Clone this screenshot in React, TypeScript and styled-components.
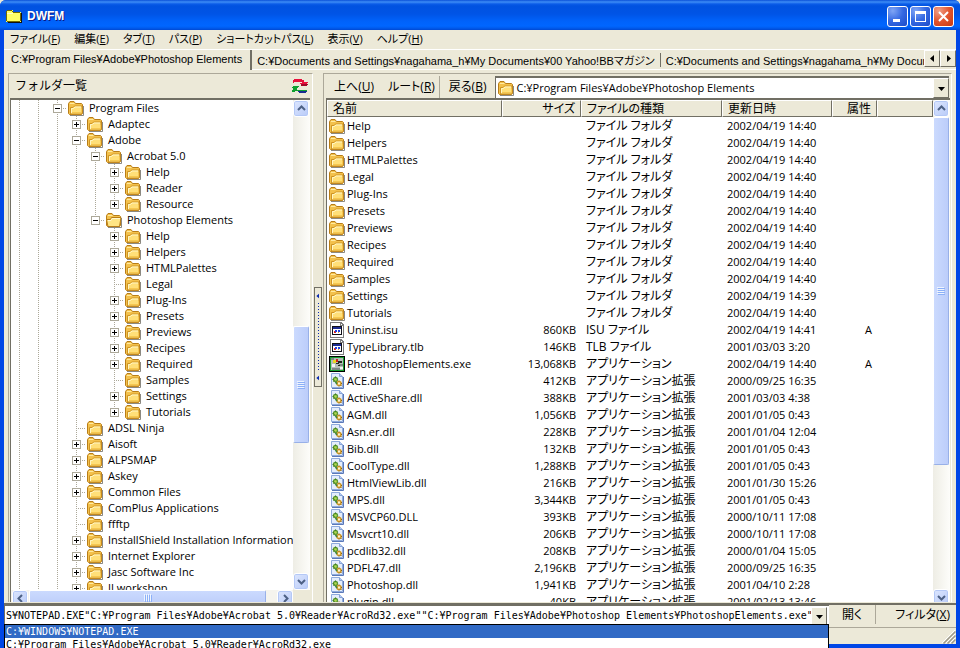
import React from 'react';
import styled, { createGlobalStyle, css } from 'styled-components';

const face = '#ece9d8';
const shade = '#aca899';
const dark = '#716f64';
const uiFont = '"Open Sans", "Noto Sans CJK JP", sans-serif';

const Global = createGlobalStyle`
  *, *::before, *::after { box-sizing: border-box; }
  html, body, #root { height: 100%; }
  body { margin: 0; overflow: hidden; background: ${face}; font: 11px/16px ${uiFont}; font-feature-settings: "palt"; color: #000; }
  button, input, select { font: inherit; font-feature-settings: inherit; color: inherit; margin: 0; padding: 0; border: 0; border-radius: 0; background: none; }
  svg { display: block; flex: none; }
`;

/* ---------- window frame ---------- */

const Window = styled.div`
  height: 100%;
  display: flex;
  flex-direction: column;
  overflow: hidden;
  background: #0046e6;
  border-radius: 6px 6px 0 0;
`;

const TitleBar = styled.header`
  flex: none;
  height: 30px;
  display: flex;
  align-items: center;
  gap: 2px;
  padding: 2px 6px 0 6px;
  background: linear-gradient(#0a50d8 0, #3d8df6 2px, #0a5ce8 4px, #0052e0 6px, #0054e6 14px, #0062fa 21px, #0066ff 26px, #005bee 28px, #0048d2 30px);
`;

const Title = styled.h1`
  flex: 1;
  margin: 0 0 0 3px;
  font: bold 12px/16px "Liberation Sans", sans-serif;
  color: #fff;
  text-shadow: 1px 1px 0 #0a1883;
`;

const CaptionButton = styled.button<{ $close?: boolean }>`
  width: 21px;
  height: 21px;
  display: grid;
  place-items: center;
  border: 1px solid #fff;
  border-radius: 3px;
  background: ${p => (p.$close
    ? 'radial-gradient(circle at 25% 20%, #f0a088, #e2552e 50%, #c63810)'
    : 'radial-gradient(circle at 25% 20%, #7fa5f5, #3468e2 50%, #1c4bc8)')};
`;

const Client = styled.div`
  flex: 1;
  min-height: 0;
  margin: 0 4px 4px;
  display: flex;
  flex-direction: column;
  background: ${face};
`;

/* ---------- menu and tabs ---------- */

const MenuBar = styled.nav`
  flex: none;
  height: 20px;
  display: flex;
  align-items: flex-start;
  border-bottom: 1px solid #fff;
`;

const MenuItem = styled.button`
  height: 18px;
  padding: 0 7px;
  line-height: 18px;
  white-space: nowrap;
  &:first-child { padding-left: 6px; }
`;

const TabStrip = styled.div`
  flex: none;
  height: 20px;
  display: flex;
  align-items: stretch;
  overflow: hidden;
`;

const TabList = styled.div`
  flex: 1;
  min-width: 0;
  display: flex;
  overflow: hidden;
`;

const Tab = styled.button<{ $active?: boolean }>`
  flex: none;
  padding: 2px 6px 0 5px;
  font-family: "Liberation Sans", "Noto Sans CJK JP", sans-serif;
  line-height: 16px;
  white-space: nowrap;
  text-align: left;
  ${p => (p.$active
    ? css`
        padding: 0 8px 2px 7px;
        border-right: 2px solid ${dark};
      `
    : css`
        border-bottom: 1px solid #fff;
        background: linear-gradient(${dark}, ${dark}) right 3px / 1px 14px no-repeat;
      `)}
`;

const TabArrows = styled.div`
  flex: none;
  display: flex;
  border-bottom: 1px solid #fff;
`;

const raised = css`
  border: 1px solid;
  border-color: #fff ${dark} ${dark} #fff;
  background: ${face};
`;

const ArrowButton = styled.button`
  ${raised}
  width: 16px;
  height: 17px;
  display: grid;
  place-items: center;
`;

/* ---------- panels ---------- */

const Panels = styled.main`
  flex: 1;
  min-height: 0;
  display: grid;
  grid-template-columns: 305px 10px minmax(0, 1fr);
  padding: 3px 4px 1px;
  overflow: hidden;
`;

const Panel = styled.section`
  min-width: 0;
  min-height: 0;
  display: flex;
  flex-direction: column;
  border: 1px solid;
  border-color: ${shade} #fff #fff ${shade};
  border-bottom: 0;
`;

const PanelHead = styled.div`
  flex: none;
  height: 24px;
  display: flex;
  align-items: center;
  padding: 0 4px 0 6px;
`;

const PanelTitle = styled.h2`
  flex: 1;
  margin: 0;
  font: 12px/16px ${uiFont};
`;

const IconButton = styled.button`
  display: block;
`;

const Well = styled.div`
  flex: 1;
  min-height: 0;
  margin: 0 1px 0 2px;
  display: flex;
  overflow: hidden;
  border-top: 2px solid ${dark};
  border-left: 1px solid ${dark};
  background: #fff;
`;

const WellMain = styled.div`
  flex: 1;
  min-width: 0;
  overflow: hidden;
`;

const TreeWell = styled(Well)`
  margin: 0 2px 0 1px;
  flex-direction: column;
`;

const TreeBody = styled.div`
  flex: 1;
  min-height: 0;
  display: flex;
`;

const Splitter = styled.div`
  display: flex;
  align-items: center;
  justify-content: center;
  padding-bottom: 2px;
`;

const Grip = styled.button`
  width: 8px;
  height: 100px;
  display: flex;
  flex-direction: column;
  align-items: center;
  justify-content: space-between;
  padding: 5px 0;
  border: 1px solid ${dark};
  background: ${face};
`;

const GripDots = styled.span`
  flex: 1;
  width: 1px;
  margin: 4px 0;
  background: repeating-linear-gradient(#0a2ab0 0 1px, transparent 1px 3px);
`;

/* ---------- scroll bars ---------- */

const VBar = styled.div<{ $tall?: boolean }>`
  flex: none;
  width: 17px;
  margin-bottom: ${p => (p.$tall ? '-4px' : 0)};
  display: flex;
  flex-direction: column;
  background: linear-gradient(90deg, #eeede5, #fdfdfa);
`;

const ScrollButton = styled.button`
  flex: none;
  width: 16px;
  height: 17px;
  display: grid;
  place-items: center;
  border: 1px solid #fff;
  border-radius: 3px;
  box-shadow: inset 0 0 0 1px #b4c8f6;
  background: linear-gradient(135deg, #dce6fe, #b9cbf8);
`;

const Track = styled.div<{ $before: number; $thumb: number; $after: number; $row?: boolean }>`
  flex: 1;
  min-height: 0;
  min-width: 0;
  display: grid;
  ${p => (p.$row ? 'grid-template-columns' : 'grid-template-rows')}: ${p => `${p.$before}fr ${p.$thumb}fr ${p.$after}fr`};
  ${p => (p.$row ? 'grid-template-rows' : 'grid-template-columns')}: 100%;
`;

const Thumb = styled.div<{ $row?: boolean }>`
  ${p => (p.$row ? 'grid-column: 2;' : 'grid-row: 2; margin-right: 1px;')}
  display: grid;
  place-items: center;
  border: 1px solid #98b0e8;
  border-top-color: #fff;
  border-left-color: #fff;
  border-radius: 2px;
  background: linear-gradient(${p => (p.$row ? '180deg' : '90deg')}, #cbdafe, #bccdfa);
`;

const HBar = styled.div`
  flex: none;
  height: 12px;
  display: flex;
  align-items: flex-start;
  overflow: hidden;
  padding-left: 1px;
  background: #f5f4ee;
`;

const HSpace = styled.div`
  flex: none;
  width: 17px;
  height: 100%;
  background: ${face};
`;

const HTrack = styled(Track)`
  height: 16px;
`;

/* ---------- tree ---------- */

const TreeList = styled.ul`
  margin: 0;
  padding: 0;
  list-style: none;
`;

const TreeRow = styled.li`
  height: 16px;
  display: flex;
  align-items: center;
  white-space: nowrap;
`;

const dotsV = `repeating-linear-gradient(${shade} 0 1px, transparent 1px 2px)`;
const dotsH = `repeating-linear-gradient(90deg, ${shade} 0 1px, transparent 1px 2px)`;

const Guide = styled.span<{ $line?: boolean; $branch?: boolean; $last?: boolean }>`
  flex: none;
  width: 19px;
  height: 16px;
  display: flex;
  align-items: center;
  padding-left: 4px;
  background-repeat: no-repeat;
  ${p => p.$line && !p.$branch && css`
    background-image: ${dotsV};
    background-size: 1px 16px;
    background-position: 8px 0;
  `}
  ${p => p.$branch && css`
    background-image: ${dotsV}, ${dotsH};
    background-size: 1px ${p.$last ? 8 : 16}px, 10px 1px;
    background-position: 8px 0, 8px 8px;
  `}
`;

const Expander = styled.button`
  width: 9px;
  height: 9px;
  background: #fff;
`;

const TreeLabel = styled.span`
  padding-left: 5px;
`;

/* ---------- file list ---------- */

const FileToolbar = styled.div`
  flex: none;
  height: 24px;
  display: flex;
  align-items: stretch;
  padding: 2px 2px 0 3px;
`;

const ToolButton = styled.button<{ $rule?: boolean }>`
  flex: none;
  padding: 0 7px;
  font-size: 12px;
  line-height: 20px;
  white-space: nowrap;
  ${p => p.$rule && css`
    padding-right: 4px;
    margin-right: 2px;
    border-right: 1px solid ${shade};
  `}
`;

const AddressBox = styled.div`
  flex: 1;
  min-width: 0;
  display: flex;
  align-items: stretch;
  margin-left: 2px;
  padding-left: 2px;
  border-top: 2px solid ${dark};
  border-left: 1px solid ${dark};
  background: #fff;
  svg { align-self: center; }
`;

const AddressSelect = styled.select`
  flex: 1;
  min-width: 0;
  appearance: none;
  padding-left: 2px;
  outline: 0;
`;

const DropButton = styled.button`
  ${raised}
  flex: none;
  width: 16px;
  display: grid;
  place-items: center;
`;

const FileTable = styled.table`
  width: 100%;
  table-layout: fixed;
  border-collapse: separate;
  border-spacing: 0;
`;

const HeadCell = styled.th<{ $align?: string }>`
  height: 17px;
  padding: 0 5px;
  font-size: 12px;
  font-weight: normal;
  line-height: 15px;
  text-align: ${p => p.$align ?? 'left'};
  white-space: nowrap;
  border: 1px solid;
  border-color: #fff ${dark} ${dark} #fff;
  background: ${face};
`;

const Cell = styled.td<{ $align?: string }>`
  height: 17px;
  padding: 0 5px;
  line-height: 17px;
  text-align: ${p => p.$align ?? 'left'};
  white-space: nowrap;
`;

const TypeCell = styled(Cell)`
  font-size: 12px;
`;

const NameCell = styled(Cell)`
  padding: 0 2px;
`;

const FileName = styled.span`
  display: flex;
  align-items: center;
  gap: 2px;
  height: 17px;
`;

/* ---------- bottom bars ---------- */

const CommandBar = styled.footer`
  flex: none;
  height: 25px;
  display: flex;
  align-items: stretch;
  border-top: 2px solid ${dark};
  border-bottom: 1px solid ${shade};
`;

const CommandCombo = styled.div`
  position: relative;
  flex: 1;
  min-width: 0;
  height: 20px;
  display: flex;
  padding: 1px 2px 0 1px;
  border-left: 1px solid ${dark};
  border-top: 1px solid ${dark};
  background: #fff;
`;

const mono = css`
  font-family: "DejaVu Sans Mono", "Noto Sans CJK JP", monospace;
  font-size: 10px;
`;

const CommandInput = styled.input`
  ${mono}
  flex: 1;
  min-width: 0;
  outline: 0;
`;

const History = styled.ul`
  ${mono}
  position: absolute;
  z-index: 2;
  top: 18px;
  left: -1px;
  right: 0;
  height: 40px;
  margin: 0;
  padding: 0;
  list-style: none;
  border: 1px solid #000;
  background: #fff;
`;

const HistoryItem = styled.li<{ $selected?: boolean }>`
  height: 13px;
  padding-left: 1px;
  line-height: 13px;
  white-space: nowrap;
  background: ${p => (p.$selected ? '#316ac5' : '#fff')};
  color: ${p => (p.$selected ? '#fff' : '#000')};
`;

const CommandActions = styled.div`
  flex: none;
  width: 127px;
  display: flex;
  justify-content: space-between;
  font-size: 12px;
`;

const OpenButton = styled.button`
  width: 47px;
  border-right: 1px solid ${shade};
  margin-bottom: 3px;
`;

const FilterButton = styled.button`
  padding: 0 6px 3px;
`;

const StatusBar = styled.div`
  flex: none;
  height: 16px;
  display: flex;
  justify-content: flex-end;
  align-items: flex-end;
`;

/* ---------- drawings ---------- */

const FolderIcon = ({ open = false }: { open?: boolean }) => (
  <svg width="16" height="16" viewBox="0 0 16 16" aria-hidden="true">
    <path d="M2 15.500h13.500V6" fill="none" stroke="#6f6c62" strokeOpacity=".8" />
    <path d="M.5 13.500V3.500l1.500-2h4l1.500 2h6l1 1v9l-1 1H1.500z" fill="#f3c14c" stroke="#b87d18" />
    <path d="M2 3.500h4.500" stroke="#ffeaa0" />
    {open ? (
      <>
        <path d="M.5 7.500h4l1-2h9.500l-1.500 9H2z" fill="#ffe584" stroke="#b87d18" />
        <path d="M2 8.500h3l1-2h8" fill="none" stroke="#fff8cf" />
      </>
    ) : (
      <>
        <path d="M2.500 14V7.500h2.500l1.500-1.500h7.500V14z" fill="#ffdf78" stroke="#cf9424" />
        <path d="M3.500 13V8.500H5.500L7 7h6" fill="none" stroke="#fff6c4" />
        <path d="M4 12.500h9.500V9" fill="none" stroke="#f7c850" />
      </>
    )}
  </svg>
);

const DocIcon = () => (
  <svg width="16" height="16" viewBox="0 0 16 16" aria-hidden="true" shapeRendering="crispEdges">
    <path d="M1 0h11l3 3v13H1z" fill="#7c7c7c" />
    <path d="M2 1h9v3h3v11H2z" fill="#fff" />
    <path d="M12 2h1v1h-1z" fill="#fff" />
    <path d="M3 4h10v9H3z" fill="#101018" />
    <path d="M4 5h8v2H4z" fill="#1c2c90" />
    <path d="M4 7h8v5H4z" fill="#fff" />
    <path d="M5 9h2v2H5z" fill="#e02020" />
    <path d="M6 8h2v2H6z" fill="#2040e0" />
    <path d="M9 8h2v2H9z" fill="#2040e0" />
    <path d="M9 10h1v1H9z" fill="#e0a020" />
  </svg>
);

const AppIcon = () => (
  <svg width="16" height="16" viewBox="0 0 16 16" aria-hidden="true" shapeRendering="crispEdges">
    <path d="M0 0h16v16H0z" fill="#000" />
    <path d="M1 1h14v14H1z" fill="#18a030" />
    <path d="M2 2h12v12H2z" fill="#b4bcb8" />
    <path d="M2 2h3v2H2zM10 8h4v2h-4zM3 12h8v2H3z" fill="#7d8a84" />
    <path d="M4 4h3v3H4z" fill="#e8d820" />
    <path d="M7 3h2v3H7z" fill="#d02020" />
    <path d="M9 5h4v2H9zM7 7h3v1H7zM9 9h2v1H9z" fill="#202820" />
    <path d="M3 8h3v3H3zM11 11h3v2h-3z" fill="#f4f6f4" />
  </svg>
);

const DllIcon = () => (
  <svg width="16" height="16" viewBox="0 0 16 16" aria-hidden="true">
    <path d="M2.500.5h8l3 3v11h-11z" fill="#e4edfc" stroke="#8fabdc" />
    <path d="M10.500.5v3h3" fill="#b7cbf2" stroke="#86a2d6" />
    <path d="M3 15.500h11.500V4" fill="none" stroke="#5a78b8" />
    <circle cx="6.500" cy="6.500" r="2" fill="#b4d850" stroke="#5c9a34" strokeWidth="1.300" />
    <path d="M6.500 3.500v1.500M3.500 6.500H5M4.500 8.500l1-1" stroke="#3f7c2c" />
    <circle cx="10" cy="10.500" r="2" fill="#fff3c8" stroke="#cf9a28" strokeWidth="1.600" />
    <path d="M10 7.500v1M12 10.500h1M10 12.500v1M11.500 12l1 1" stroke="#8f6410" />
    <path d="M6.500 9l1.500 2" stroke="#3c8438" strokeWidth="1.500" />
  </svg>
);

const TitleIcon = () => (
  <svg width="16" height="14" viewBox="0 0 16 14" aria-hidden="true" shapeRendering="crispEdges">
    <path d="M1 1h6v2h8v10H0V2h1z" fill="#ffff66" />
    <path d="M1 1h5v1H1zM0 2h1v10H0zM6 2h1v1H6zM7 3h7v1H7zM14 4h1v8h-1zM1 12h13v1H1z" fill="#6f6a00" />
    <path d="M15 4h1v9h-1zM2 13h14v1H2z" fill="#101010" />
    <path d="M1 4h6v1H1z" fill="#fffdd0" />
  </svg>
);

const RefreshIcon = () => (
  <svg width="16" height="15" viewBox="0 0 16 15" aria-hidden="true" shapeRendering="crispEdges">
    <path d="M1 1h1V0h8v1h2v2h4v1h-1v1h-1v1h-5V5h-1V4h2V3H2v1H1z" fill="#e8103c" />
    <path d="M9 5h7v1h-1v1H9z" fill="#a00828" />
    <path d="M0 8h1V7h6v1H6v1h-1v2h5v1H5v-1H3v-1H1V9H0z" fill="#10a030" />
    <path d="M1 8h4v3h10v2H6v-1H3v1H0v-2h1z" fill="#10a030" />
    <path d="M6 12h9v1h-1v1H7v-1H6z" fill="#182c90" />
  </svg>
);

type Dir = 'up' | 'down' | 'left' | 'right';
const chevrons: Record<Dir, string> = {
  up: 'M1 6l3.500-3.500L8 6',
  down: 'M1 3l3.500 3.500L8 3',
  left: 'M6 1L2.500 4.500 6 8',
  right: 'M3 1l3.500 3.500L3 8',
};
const triangles: Record<Dir, string> = {
  up: 'M1 6h7L4.500 2z',
  down: 'M1 3h7L4.500 7z',
  left: 'M6 1v7L2 4.500z',
  right: 'M3 1v7l4-3.500z',
};

const Chevron = ({ dir }: { dir: Dir }) => (
  <svg width="9" height="9" viewBox="0 0 9 9" aria-hidden="true">
    <path d={chevrons[dir]} fill="none" stroke="#4d6185" strokeWidth="2" />
  </svg>
);

const Triangle = ({ dir, small, color = '#000' }: { dir: Dir; small?: boolean; color?: string }) => (
  <svg width={small ? 6 : 9} height={small ? 6 : 9} viewBox="0 0 9 9" aria-hidden="true">
    <path d={triangles[dir]} fill={color} />
  </svg>
);

const Ridges = ({ row }: { row?: boolean }) => (
  <svg width="8" height="8" viewBox="0 0 8 8" aria-hidden="true" shapeRendering="crispEdges">
    <path d={row ? 'M0 0h1v7H0zM2 0h1v7H2zM4 0h1v7H4zM6 0h1v7H6z' : 'M0 0h7v1H0zM0 2h7v1H0zM0 4h7v1H0zM0 6h7v1H0z'} fill="#eef4fe" />
    <path d={row ? 'M1 1h1v7H1zM3 1h1v7H3zM5 1h1v7H5zM7 1h1v7H7z' : 'M1 1h7v1H1zM1 3h7v1H1zM1 5h7v1H1zM1 7h7v1H1z'} fill="#8cb0f8" />
  </svg>
);

const BoxIcon = ({ open }: { open: boolean }) => (
  <svg width="9" height="9" viewBox="0 0 9 9" aria-hidden="true" shapeRendering="crispEdges">
    <path d="M0 0h9v9H0z" fill="#aca899" />
    <path d="M1 1h7v7H1z" fill="#fff" />
    <path d={open ? 'M2 4h5v1H2z' : 'M2 4h5v1H2zM4 2h1v5H4z'} fill="#000" />
  </svg>
);

const SizeGrip = () => (
  <svg width="14" height="14" viewBox="0 0 14 14" aria-hidden="true">
    <path d="M0 13L13 0M4 13l9-9M8 13l5-5" stroke="#fff" />
    <path d="M1.500 13.500l12-12M5.500 13.500l8-8M9.500 13.500l4-4" stroke="#9d9a8b" strokeWidth="1.500" />
  </svg>
);

/* ---------- data ---------- */

const menus: [string, string][] = [
  ['ファイル', 'F'], ['編集', 'E'], ['タブ', 'T'], ['パス', 'P'],
  ['ショートカットパス', 'L'], ['表示', 'V'], ['ヘルプ', 'H'],
];

type Mark = '+' | '-' | '';
// [label, expander mark, line per level: "|" through, "L" last child, " " none]
const tree: [string, Mark, string][] = [
  ['Program Files', '-', '|||'],
  ['Adaptec', '+', '||||'],
  ['Adobe', '-', '||||'],
  ['Acrobat 5.0', '-', '|||||'],
  ['Help', '+', '||||||'],
  ['Reader', '+', '||||||'],
  ['Resource', '+', '|||||L'],
  ['Photoshop Elements', '-', '||||L'],
  ['Help', '+', '|||| |'],
  ['Helpers', '+', '|||| |'],
  ['HTMLPalettes', '+', '|||| |'],
  ['Legal', '', '|||| |'],
  ['Plug-Ins', '+', '|||| |'],
  ['Presets', '+', '|||| |'],
  ['Previews', '+', '|||| |'],
  ['Recipes', '+', '|||| |'],
  ['Required', '+', '|||| |'],
  ['Samples', '', '|||| |'],
  ['Settings', '+', '|||| |'],
  ['Tutorials', '+', '|||| L'],
  ['ADSL Ninja', '', '||||'],
  ['Aisoft', '+', '||||'],
  ['ALPSMAP', '+', '||||'],
  ['Askey', '+', '||||'],
  ['Common Files', '+', '||||'],
  ['ComPlus Applications', '', '||||'],
  ['ffftp', '', '||||'],
  ['InstallShield Installation Information', '+', '||||'],
  ['Internet Explorer', '+', '||||'],
  ['Jasc Software Inc', '+', '||||'],
  ['JJ workshop', '+', '||||'],
];

type Kind = 'folder' | 'doc' | 'app' | 'dll';
type FileRow = [Kind, string, string, string, string, string];
const folder = (name: string, time = '14:40'): FileRow => ['folder', name, '', 'ファイル フォルダ', `2002/04/19 ${time}`, ''];
const dll = (name: string, size: string, date: string): FileRow => ['dll', name, size, 'アプリケーション拡張', date, ''];

const files: FileRow[] = [
  folder('Help'), folder('Helpers'), folder('HTMLPalettes'), folder('Legal'),
  folder('Plug-Ins'), folder('Presets'), folder('Previews'), folder('Recipes'),
  folder('Required'), folder('Samples'), folder('Settings', '14:39'), folder('Tutorials'),
  ['doc', 'Uninst.isu', '860KB', 'ISU ファイル', '2002/04/19 14:41', 'A'],
  ['doc', 'TypeLibrary.tlb', '146KB', 'TLB ファイル', '2001/03/03 3:20', ''],
  ['app', 'PhotoshopElements.exe', '13,068KB', 'アプリケーション', '2002/04/19 14:40', 'A'],
  dll('ACE.dll', '412KB', '2000/09/25 16:35'),
  dll('ActiveShare.dll', '388KB', '2001/03/03 4:38'),
  dll('AGM.dll', '1,056KB', '2001/01/05 0:43'),
  dll('Asn.er.dll', '228KB', '2001/01/04 12:04'),
  dll('Bib.dll', '132KB', '2001/01/05 0:43'),
  dll('CoolType.dll', '1,288KB', '2001/01/05 0:43'),
  dll('HtmlViewLib.dll', '216KB', '2001/01/30 15:26'),
  dll('MPS.dll', '3,344KB', '2001/01/05 0:43'),
  dll('MSVCP60.DLL', '393KB', '2000/10/11 17:08'),
  dll('Msvcrt10.dll', '206KB', '2000/10/11 17:08'),
  dll('pcdlib32.dll', '208KB', '2000/01/04 15:05'),
  dll('PDFL47.dll', '2,196KB', '2000/09/25 16:35'),
  dll('Photoshop.dll', '1,941KB', '2001/04/10 2:28'),
  dll('plugin.dll', '40KB', '2001/02/13 13:46'),
];

const icons: Record<Kind, React.ReactNode> = {
  folder: <FolderIcon />, doc: <DocIcon />, app: <AppIcon />, dll: <DllIcon />,
};

const Accel = ({ text, k }: { text: string; k: string }) => <>{text}(<u>{k}</u>)</>;

const VScroll = ({ before, thumb, after, tall }: { before: number; thumb: number; after: number; tall?: boolean }) => (
  <VBar $tall={tall}>
    <ScrollButton aria-label="上へスクロール"><Chevron dir="up" /></ScrollButton>
    <Track $before={before} $thumb={thumb} $after={after}><Thumb><Ridges /></Thumb></Track>
    <ScrollButton aria-label="下へスクロール"><Chevron dir="down" /></ScrollButton>
  </VBar>
);

const TreeItem = ({ item: [label, mark, lines] }: { item: [string, Mark, string] }) => (
  <TreeRow>
    {lines.split('').map((c, i) => {
      const own = i === lines.length - 1;
      return (
        <Guide key={i} $line={c !== ' '} $branch={own} $last={c === 'L'}>
          {own && mark && (
            <Expander aria-label={label} aria-expanded={mark === '-'}><BoxIcon open={mark === '-'} /></Expander>
          )}
        </Guide>
      );
    })}
    <FolderIcon open={label === 'Photoshop Elements'} />
    <TreeLabel>{label}</TreeLabel>
  </TreeRow>
);

export default function App() {
  return (
    <>
      <Global />
      <Window>
        <TitleBar>
          <TitleIcon />
          <Title>DWFM</Title>
          <CaptionButton aria-label="最小化">
            <svg width="15" height="15" viewBox="0 0 15 15"><path d="M3 10h7v3H3z" fill="#fff" /></svg>
          </CaptionButton>
          <CaptionButton aria-label="最大化">
            <svg width="15" height="15" viewBox="0 0 15 15"><path d="M2 2h11v11H2zM3 5v7h9V5z" fill="#fff" fillRule="evenodd" /></svg>
          </CaptionButton>
          <CaptionButton $close aria-label="閉じる">
            <svg width="15" height="15" viewBox="0 0 15 15"><path d="M3 3l9 9M12 3l-9 9" stroke="#fff" strokeWidth="2" /></svg>
          </CaptionButton>
        </TitleBar>
        <Client>
          <MenuBar>
            {menus.map(([text, k]) => <MenuItem key={k}><Accel text={text} k={k} /></MenuItem>)}
          </MenuBar>
          <TabStrip>
            <TabList role="tablist">
              <Tab role="tab" aria-selected $active>C:¥Program Files¥Adobe¥Photoshop Elements</Tab>
              <Tab role="tab" aria-selected={false}>C:¥Documents and Settings¥nagahama_h¥My Documents¥00 Yahoo!BBマガジン</Tab>
              <Tab role="tab" aria-selected={false}>C:¥Documents and Settings¥nagahama_h¥My Documents</Tab>
            </TabList>
            <TabArrows>
              <ArrowButton aria-label="前のタブ"><Triangle dir="left" /></ArrowButton>
              <ArrowButton aria-label="次のタブ"><Triangle dir="right" /></ArrowButton>
            </TabArrows>
          </TabStrip>

          <Panels>
            <Panel>
              <PanelHead>
                <PanelTitle>フォルダ一覧</PanelTitle>
                <IconButton aria-label="更新"><RefreshIcon /></IconButton>
              </PanelHead>
              <TreeWell>
                <TreeBody>
                  <WellMain>
                    <TreeList>{tree.map((item, i) => <TreeItem key={i} item={item} />)}</TreeList>
                  </WellMain>
                  <VScroll before={209} thumb={117} after={130} />
                </TreeBody>
                <HBar>
                  <ScrollButton aria-label="左へスクロール"><Chevron dir="left" /></ScrollButton>
                  <HTrack $row $before={1} $thumb={237} $after={11}><Thumb $row><Ridges row /></Thumb></HTrack>
                  <ScrollButton aria-label="右へスクロール"><Chevron dir="right" /></ScrollButton>
                  <HSpace />
                </HBar>
              </TreeWell>
            </Panel>

            <Splitter>
              <Grip aria-label="フォルダ一覧を閉じる">
                <Triangle dir="left" small color="#0a2ab0" />
                <GripDots />
                <Triangle dir="left" small color="#0a2ab0" />
              </Grip>
            </Splitter>

            <Panel>
              <FileToolbar>
                <ToolButton><Accel text="上へ" k="U" /></ToolButton>
                <ToolButton $rule><Accel text="ルート" k="R" /></ToolButton>
                <ToolButton><Accel text="戻る" k="B" /></ToolButton>
                <AddressBox>
                  <FolderIcon />
                  <AddressSelect aria-label="パス">
                    <option>C:¥Program Files¥Adobe¥Photoshop Elements</option>
                  </AddressSelect>
                  <DropButton aria-label="パス一覧"><Triangle dir="down" /></DropButton>
                </AddressBox>
              </FileToolbar>
              <Well>
                <WellMain>
                  <FileTable>
                    <colgroup>
                      <col width="175" /><col width="79" /><col width="141" />
                      <col width="110" /><col width="45" /><col />
                    </colgroup>
                    <thead>
                      <tr>
                        <HeadCell>名前</HeadCell>
                        <HeadCell $align="right">サイズ</HeadCell>
                        <HeadCell>ファイルの種類</HeadCell>
                        <HeadCell>更新日時</HeadCell>
                        <HeadCell $align="right">属性</HeadCell>
                        <HeadCell aria-hidden="true" />
                      </tr>
                    </thead>
                    <tbody>
                      {files.map(([kind, name, size, type, date, attr]) => (
                        <tr key={name}>
                          <NameCell><FileName>{icons[kind]}{name}</FileName></NameCell>
                          <Cell $align="right">{size}</Cell>
                          <TypeCell>{type}</TypeCell>
                          <Cell>{date}</Cell>
                          <Cell $align="right">{attr}</Cell>
                          <Cell />
                        </tr>
                      ))}
                    </tbody>
                  </FileTable>
                </WellMain>
                <VScroll before={0} thumb={348} after={124} tall />
              </Well>
            </Panel>
          </Panels>

          <CommandBar>
            <CommandCombo>
              <CommandInput
                aria-label="コマンド"
                defaultValue={'S¥NOTEPAD.EXE"C:¥Program Files¥Adobe¥Acrobat 5.0¥Reader¥AcroRd32.exe""C:¥Program Files¥Adobe¥Photoshop Elements¥PhotoshopElements.exe"'}
              />
              <DropButton aria-label="履歴"><Triangle dir="down" /></DropButton>
              <History>
                <HistoryItem $selected>C:¥WINDOWS¥NOTEPAD.EXE</HistoryItem>
                <HistoryItem>C:¥Program Files¥Adobe¥Acrobat 5.0¥Reader¥AcroRd32.exe</HistoryItem>
              </History>
            </CommandCombo>
            <CommandActions>
              <OpenButton>開く</OpenButton>
              <FilterButton><Accel text="フィルタ" k="X" /></FilterButton>
            </CommandActions>
          </CommandBar>
          <StatusBar><SizeGrip /></StatusBar>
        </Client>
      </Window>
    </>
  );
}
